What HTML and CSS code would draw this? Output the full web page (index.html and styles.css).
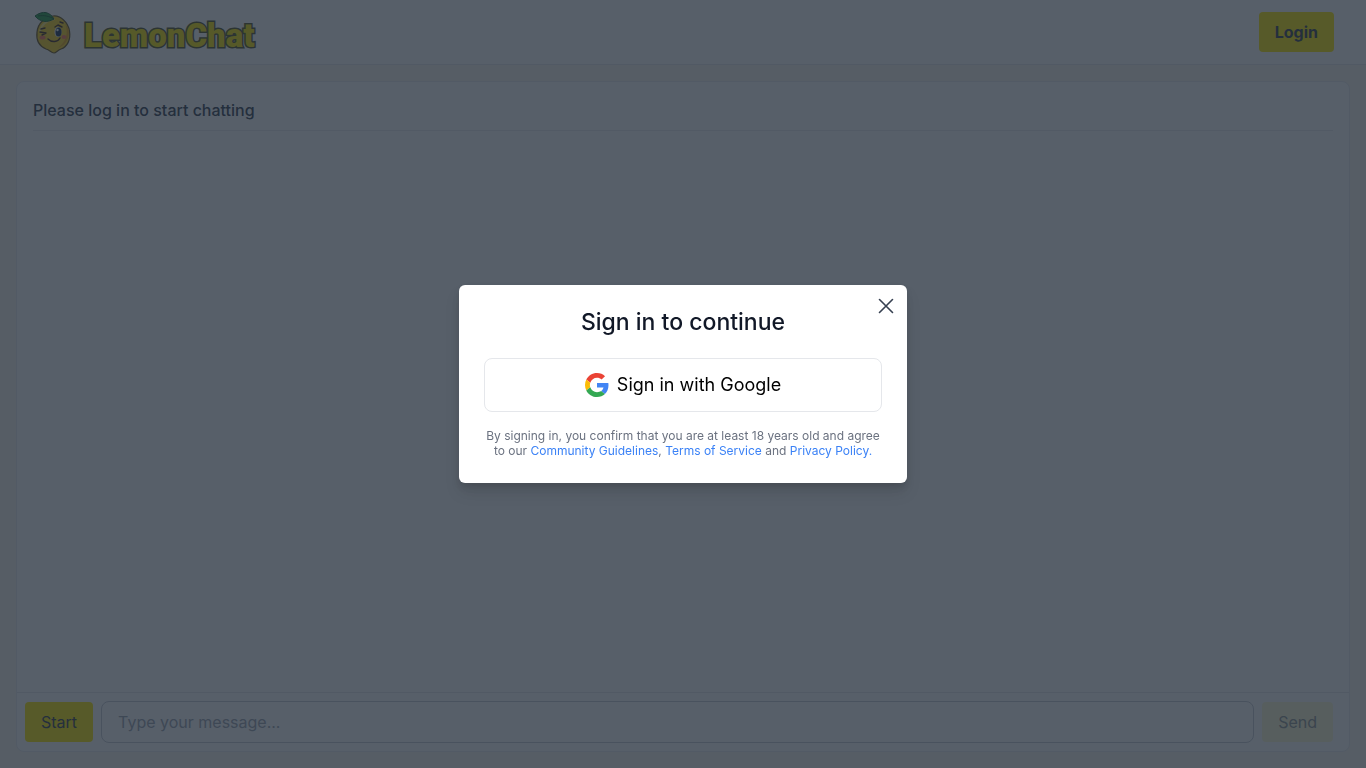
FILE: index.html
```html
<!DOCTYPE html>
<html lang="en">
<head>
<meta charset="utf-8">
<meta name="viewport" content="width=device-width, initial-scale=1">
<title>LemonChat</title>
<link rel="stylesheet" href="styles.css">
</head>
<body>
<div class="page">
  <header class="topbar">
    <a class="brand" href="#">
      <svg class="brand-mark" viewBox="0 0 38 44" aria-hidden="true">
        <path d="M19 5C26 4 34 11 35.500 20C37 29 33 36 27 38C24 39 22 42 20 42C17 42 16 39 12 38C5 35 2 29 3 21C4 12 11 6 19 5Z" fill="#fcd21c" stroke="#6b5520" stroke-width="1.200"/>
        <path d="M31 12C35 22 32 31 24 37C33 34 36 25 34.500 18Z" fill="#e9a815"/>
        <path d="M20 8C12 10 7 14 6 20" fill="none" stroke="#ffe978" stroke-width="2" stroke-linecap="round"/>
        <path d="M20 8C16 1 9-1 1 5C6 11 13 12 20 8Z" fill="#28a148" stroke="#176334"/>
        <path d="M4 5C10 4 15 5 20 8" fill="none" stroke="#176334"/>
        <ellipse cx="8.500" cy="26.500" rx="3" ry="2" fill="#ff7957"/>
        <ellipse cx="30" cy="26" rx="2.500" ry="2" fill="#ff7957"/>
        <ellipse cx="24" cy="21" rx="3.500" ry="5" fill="#fff"/>
        <ellipse cx="24.500" cy="21" rx="3" ry="4.500" fill="#183359"/>
        <circle cx="23.500" cy="19" r="1.200" fill="#fff"/>
        <path d="M21 16L24 14L28 16M26 11L29 12M6 21L12 22L8 24M7 18L11 17M14 28C18 32 24 31 26 27" fill="none" stroke="#442b1d" stroke-width="1.400" stroke-linecap="round" stroke-linejoin="round"/>
      </svg>
      <span class="brand-name">LemonChat</span>
    </a>
    <button class="btn btn-login" type="button">Login</button>
  </header>
  <main class="content">
    <section class="chat">
      <div class="messages"><p class="notice">Please log in to start chatting</p></div>
      <form class="composer">
        <button class="btn" type="button">Start</button>
        <input class="message-input" type="text" placeholder="Type your message..." aria-label="Type your message">
        <button class="btn btn-send" type="button" disabled>Send</button>
      </form>
    </section>
  </main>
</div>
<div class="overlay">
  <div class="dialog" role="dialog" aria-modal="true" aria-labelledby="dialog-title">
    <button class="close" type="button" aria-label="Close">
      <svg viewBox="0 0 24 24" aria-hidden="true"><path d="M6 18L18 6M6 6L18 18" fill="none" stroke="currentColor" stroke-width="1.500" stroke-linecap="round"/></svg>
    </button>
    <h1 class="dialog-title" id="dialog-title">Sign in to continue</h1>
    <button class="google" type="button">
      <svg viewBox="0 0 48 48" aria-hidden="true">
        <path fill="#EA4335" d="M24 9.500c3.540 0 6.710 1.220 9.210 3.600l6.850-6.850C35.900 2.380 30.470 0 24 0 14.620 0 6.510 5.380 2.560 13.220l7.980 6.190C12.430 13.720 17.740 9.500 24 9.500z"/>
        <path fill="#4285F4" d="M46.980 24.550c0-1.570-.15-3.090-.38-4.550H24v9.020h12.940c-.58 2.960-2.260 5.480-4.780 7.180l7.730 6c4.510-4.180 7.090-10.360 7.090-17.650z"/>
        <path fill="#FBBC05" d="M10.530 28.590A14.500 14.500 0 0 1 9.770 24c0-1.600.27-3.140.76-4.590l-7.980-6.190A23.900 23.900 0 0 0 0 24c0 3.880.92 7.540 2.560 10.780l7.970-6.190z"/>
        <path fill="#34A853" d="M24 48c6.480 0 11.930-2.130 15.890-5.810l-7.730-6c-2.150 1.450-4.920 2.300-8.160 2.300-6.260 0-11.570-4.220-13.470-9.910l-7.980 6.190C6.510 42.620 14.620 48 24 48z"/>
      </svg>
      <span>Sign in with Google</span>
    </button>
    <p class="terms">By signing in, you confirm that you are at least 18 years old and agree to our <a href="#">Community Guidelines</a>, <a href="#">Terms of Service</a> and <a href="#">Privacy Policy.</a></p>
  </div>
</div>
</body>
</html>
```
FILE: styles.css
```css
*, *::before, *::after { box-sizing: border-box; }
body {
  margin: 0;
  font-family: Inter, "Liberation Sans", sans-serif;
  font-size: 16px;
  line-height: 24px;
  color: #374151;
}
button, input { font: inherit; color: inherit; }
h1, p { margin: 0; }
.page {
  display: flex;
  flex-direction: column;
  min-height: 100vh;
  background: #faf5f0;
}
.topbar {
  display: flex;
  align-items: center;
  justify-content: space-between;
  padding: 12px 32px;
  background: #fff;
  border-bottom: 1px solid #e5e7eb;
}
.brand {
  display: flex;
  align-items: center;
  gap: 12px;
  height: 40px;
  padding: 2px 0 0 2px;
  text-decoration: none;
}
.brand-mark { width: 38px; height: 44px; }
.brand-name {
  padding-top: 6px;
  font-family: Impact, Roboto, "Liberation Sans", sans-serif;
  font-size: 33px;
  font-weight: 900;
  line-height: 40px;
  color: #fae800;
  -webkit-text-stroke: 3px #55542b;
  paint-order: stroke fill;
}
.btn {
  padding: 8px 16px;
  border: 0;
  border-radius: 4px;
  background: #ffe900;
}
.btn-login { font-weight: 700; }
.content {
  flex: 1;
  display: flex;
  padding: 16px;
}
.chat {
  flex: 1;
  display: flex;
  flex-direction: column;
  background: #fff;
  border: 1px solid #e9ebee;
  border-radius: 8px;
}
.messages { flex: 1; padding: 16px; }
.notice {
  padding-bottom: 8px;
  border-bottom: 1px solid #e9ebee;
  font-weight: 500;
}
.composer {
  display: flex;
  align-items: center;
  gap: 8px;
  padding: 8px 16px 8px 8px;
  border-top: 1px solid #e5e7eb;
}
.message-input {
  flex: 1;
  min-width: 0;
  padding: 8px 16px;
  border: 1px solid #c5cad2;
  border-radius: 8px;
  background: #fff;
}
.message-input::placeholder { color: #9ca3af; opacity: 1; }
.btn-send { background: #fff9d4; color: #8f9692; }
.overlay {
  position: fixed;
  inset: 0;
  display: flex;
  align-items: center;
  justify-content: center;
  padding: 16px;
  background: rgba(31, 41, 55, .75);
}
.dialog {
  position: relative;
  width: 100%;
  max-width: 448px;
  padding: 21px 25px 25px;
  background: #fff;
  border-radius: 6px;
  box-shadow: 0 10px 15px rgba(0, 0, 0, .1), 0 4px 6px rgba(0, 0, 0, .1);
  text-align: center;
}
.close {
  position: absolute;
  top: 8px;
  right: 8px;
  display: flex;
  padding: 0;
  border: 0;
  background: none;
  color: #374151;
}
.close svg { width: 26px; height: 26px; }
.dialog-title {
  margin-bottom: 20px;
  font-size: 23px;
  line-height: 32px;
  font-weight: 500;
  color: #111827;
}
.google {
  display: flex;
  align-items: center;
  justify-content: center;
  gap: 8px;
  width: 100%;
  padding: 12px 16px;
  border: 1px solid #e5e7eb;
  border-radius: 8px;
  background: #fff;
  color: #000;
  font-size: 18px;
  line-height: 28px;
}
.google svg { width: 24px; height: 24px; }
.terms {
  margin-top: 16px;
  font-size: 12px;
  line-height: 15px;
  color: #6b7280;
}
.terms a { color: #3b82f6; text-decoration: none; }
```
